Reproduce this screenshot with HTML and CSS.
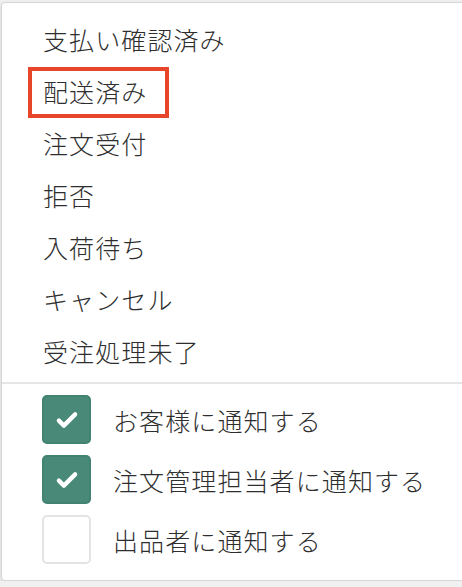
FILE: index.html
```html
<!DOCTYPE html>
<html lang="ja">
<head>
  <meta charset="UTF-8">
  <title>Status menu</title>
  <link rel="stylesheet" href="styles.css">
</head>
<body>
<div class="menu">
  <ul class="status-list">
    <li>支払い確認済み</li>
    <li><span class="marked">配送済み</span></li>
    <li>注文受付</li>
    <li>拒否</li>
    <li>入荷待ち</li>
    <li>キャンセル</li>
    <li>受注処理未了</li>
  </ul>

  <div class="notify-list">
    <label class="notify-row">
      <span class="check on">
        <svg viewBox="0 0 24 24" width="30" height="30"><path d="M5.5 12.5l4 4L18.5 7.5" fill="none" stroke="#fff" stroke-width="3.4" stroke-linecap="round" stroke-linejoin="round"/></svg>
      </span>
      <span>お客様に通知する</span>
    </label>
    <label class="notify-row">
      <span class="check on">
        <svg viewBox="0 0 24 24" width="30" height="30"><path d="M5.5 12.5l4 4L18.5 7.5" fill="none" stroke="#fff" stroke-width="3.4" stroke-linecap="round" stroke-linejoin="round"/></svg>
      </span>
      <span>注文管理担当者に通知する</span>
    </label>
    <label class="notify-row">
      <span class="check"></span>
      <span>出品者に通知する</span>
    </label>
  </div>
</div>
</body>
</html>
```

FILE: styles.css
```css
body {
  margin: 0;
  padding: 0;
  background-color: #f0f0f0;
  font-family: "Noto Sans CJK JP", "Noto Sans", sans-serif;
  font-weight: 300;
  color: #2e2e2e;
}

.menu {
  margin: 2px 0 0 1px;
  width: 470px;
  height: 579px;
  box-sizing: border-box;
  background: #ffffff;
  border: 1px solid #d6d6d6;
  border-radius: 4px;
  box-shadow: 0 2px 4px rgba(0, 0, 0, 0.12);
}

.status-list {
  list-style: none;
  margin: 0;
  padding: 10px 0 5px 0;
  border-bottom: 2px solid #e6e6e6;
}

.status-list li {
  height: 52px;
  line-height: 52px;
  padding-left: 41px;
  font-size: 25px;
  letter-spacing: 1.1px;
}

.marked {
  position: relative;
}

.marked::after {
  content: "";
  position: absolute;
  left: -15px;
  right: -22px;
  top: -6px;
  bottom: -9px;
  border: 4px solid #e8462b;
}

.notify-list {
  display: flex;
  flex-direction: column;
  gap: 11px;
  padding: 11px 0 0 40px;
}

.notify-row {
  display: flex;
  align-items: center;
  gap: 22px;
  font-size: 25px;
  letter-spacing: 1.1px;
}

.check {
  width: 49px;
  height: 49px;
  box-sizing: border-box;
  border: 2px solid #e4e4e4;
  border-radius: 5px;
  background: #ffffff;
  display: flex;
  align-items: center;
  justify-content: center;
}

.check.on {
  background: #488a77;
  border-color: #418270;
}
```
